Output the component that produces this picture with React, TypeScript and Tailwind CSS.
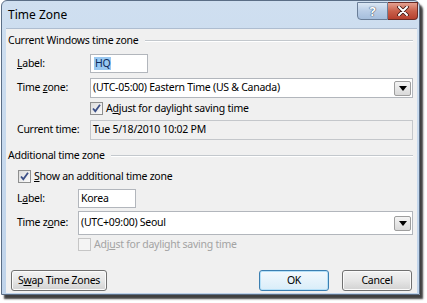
import React from "react";

const font = { fontFamily: '"Noto Sans", "Open Sans", sans-serif' };

function Check({ checked, disabled }: { checked?: boolean; disabled?: boolean }) {
  return (
    <div
      className={
        "w-[13px] h-[13px] shrink-0 border flex items-center justify-center " +
        (disabled
          ? "border-[#c6c6c6] bg-[#f4f4f4]"
          : "border-[#8e8f8f] bg-gradient-to-br from-[#dcdcdc] to-[#fbfbfb]")
      }
    >
      {checked && (
        <svg width="11" height="11" viewBox="0 0 11 11">
          <path d="M2 5.5 L4.3 8.2 L9 1.8" fill="none" stroke="#3b4f87" strokeWidth="1.8" />
        </svg>
      )}
    </div>
  );
}

function DropBtn() {
  return (
    <div className="w-[17px] h-[15px] border border-[#9e9e9e] rounded-[2px] bg-gradient-to-b from-[#f4f4f4] to-[#d9d9d9] flex items-center justify-center">
      <svg width="8" height="5" viewBox="0 0 8 5">
        <path d="M0 0 H8 L4 5 Z" fill="#000" />
      </svg>
    </div>
  );
}

function Heading({ text }: { text: string }) {
  return (
    <div className="flex items-center h-[15px] pl-[2px] pr-[4px]">
      <span className="whitespace-nowrap">{text}</span>
      <div className="flex-1 ml-[6px] border-t border-[#c3c8cd] border-b border-b-white" />
    </div>
  );
}

function Btn({ children, w, def }: { children: React.ReactNode; w: string; def?: boolean }) {
  return (
    <div
      className={
        w +
        " h-[21px] rounded-[3px] border flex items-center justify-center whitespace-nowrap " +
        (def
          ? "border-[#3c7fb1] bg-gradient-to-b from-[#f3f9fd] to-[#d9edf9] shadow-[inset_0_0_0_1px_#b5e0f8]"
          : "border-[#707070] bg-gradient-to-b from-[#f2f2f2] via-[#e6e6e6] to-[#d2d2d2] shadow-[inset_0_0_0_1px_#fbfbfb]")
      }
    >
      {children}
    </div>
  );
}

export default function App() {
  return (
    <div className="w-[427px] h-[303px] bg-white pl-[1px] text-[10.5px] tracking-[-0.25px] text-black" style={font}>
      <div className="w-[419px] h-[295px] rounded-t-[6px] border border-[#5b6e86] bg-gradient-to-b from-[#cfdff0] to-[#bfd3ea] shadow-[3px_4px_2px_rgba(0,0,0,0.75)] flex flex-col">
        {/* Title bar */}
        <div className="h-[27px] flex items-start shrink-0">
          <div className="ml-[6px] mt-[6px] text-[12px] leading-[16px] tracking-normal">Time Zone</div>
          <div className="flex-1" />
          <div className="mt-[1px] flex">
            <div className="w-[31px] h-[18px] rounded-bl-[4px] border border-[#6a7e98] bg-gradient-to-b from-[#dbe7f4] via-[#b9cde6] to-[#a5bedc] flex items-center justify-center">
              <span className="text-[13px] font-bold leading-none text-white [text-shadow:0_0_1px_#24364f,0_0_1px_#24364f]">?</span>
            </div>
            <div className="w-[30px] h-[18px] mr-[1px] rounded-br-[4px] border border-l-0 border-[#6b2b24] bg-gradient-to-b from-[#e4a090] via-[#c9604b] to-[#b6402e] flex items-center justify-center">
              <svg width="12" height="10" viewBox="0 0 12 10">
                <path d="M2 1 L10 9 M10 1 L2 9" stroke="#3a1410" strokeWidth="3.6" strokeLinecap="round" />
                <path d="M2 1 L10 9 M10 1 L2 9" stroke="#fff" strokeWidth="2" strokeLinecap="round" />
              </svg>
            </div>
          </div>
        </div>
        {/* Content */}
        <div className="flex-1 ml-[4px] mr-[2px] mb-[1px] bg-[#f0f0f0] border-t border-[#aebdd0] flex flex-col pt-[4px]">
          <Heading text="Current Windows time zone" />
          <div className="mt-[6px] flex items-center h-[19px]">
            <div className="ml-[11px] w-[73px]"><u>L</u>abel:</div>
            <div className="w-[58px] h-[19px] bg-white border border-[#b2b6bc] flex items-center pl-[3px]">
              <span className="bg-[#99c8f1] text-[#0c2b5c] px-[1px] leading-[13px]">HQ</span>
            </div>
          </div>
          <div className="mt-[5px] flex items-center h-[20px]">
            <div className="ml-[11px] w-[73px]">Time <u>z</u>one:</div>
            <div className="w-[323px] h-[20px] bg-white border border-[#b2b6bc] flex items-center pl-[2px] pr-[1px]">
              <span className="flex-1">(UTC-05:00) Eastern Time (US &amp; Canada)</span>
              <DropBtn />
            </div>
          </div>
          <div className="mt-[4px] flex items-center h-[13px] pl-[84px]">
            <Check checked />
            <span className="ml-[3px]">A<u>d</u>just for daylight saving time</span>
          </div>
          <div className="mt-[5px] flex items-center h-[20px]">
            <div className="ml-[11px] w-[73px]">Current time:</div>
            <div className="w-[323px] h-[20px] bg-[#f0f0f0] border border-[#c4c7cb] flex items-center pl-[2px]">
              Tue 5/18/2010 10:02 PM
            </div>
          </div>
          <div className="mt-[8px]">
            <Heading text="Additional time zone" />
          </div>
          <div className="mt-[7px] flex items-center h-[13px] pl-[12px]">
            <Check checked />
            <span className="ml-[3px]"><u>S</u>how an additional time zone</span>
          </div>
          <div className="mt-[6px] flex items-center h-[19px]">
            <div className="ml-[11px] w-[61px]">L<u>a</u>bel:</div>
            <div className="w-[58px] h-[19px] bg-white border border-[#b2b6bc] flex items-center pl-[2px]">Korea</div>
          </div>
          <div className="mt-[3px] flex items-center h-[24px]">
            <div className="ml-[11px] w-[61px]">Time z<u>o</u>ne:</div>
            <div className="w-[335px] h-[24px] bg-white border border-[#b2b6bc] flex items-center pl-[2px] pr-[1px]">
              <span className="flex-1">(UTC+09:00) Seoul</span>
              <DropBtn />
            </div>
          </div>
          <div className="mt-[3px] flex items-center h-[13px] pl-[72px] text-[#a3a3a3]">
            <Check disabled />
            <span className="ml-[3px]">Adj<u>u</u>st for daylight saving time</span>
          </div>
          <div className="mt-[19px] flex items-center pl-[5px] pr-[5px]">
            <Btn w="w-[96px]">S<u>w</u>ap Time Zones</Btn>
            <div className="flex-1" />
            <Btn w="w-[70px]" def>OK</Btn>
            <div className="w-[13px]" />
            <Btn w="w-[70px]">Cancel</Btn>
          </div>
        </div>
      </div>
    </div>
  );
}
